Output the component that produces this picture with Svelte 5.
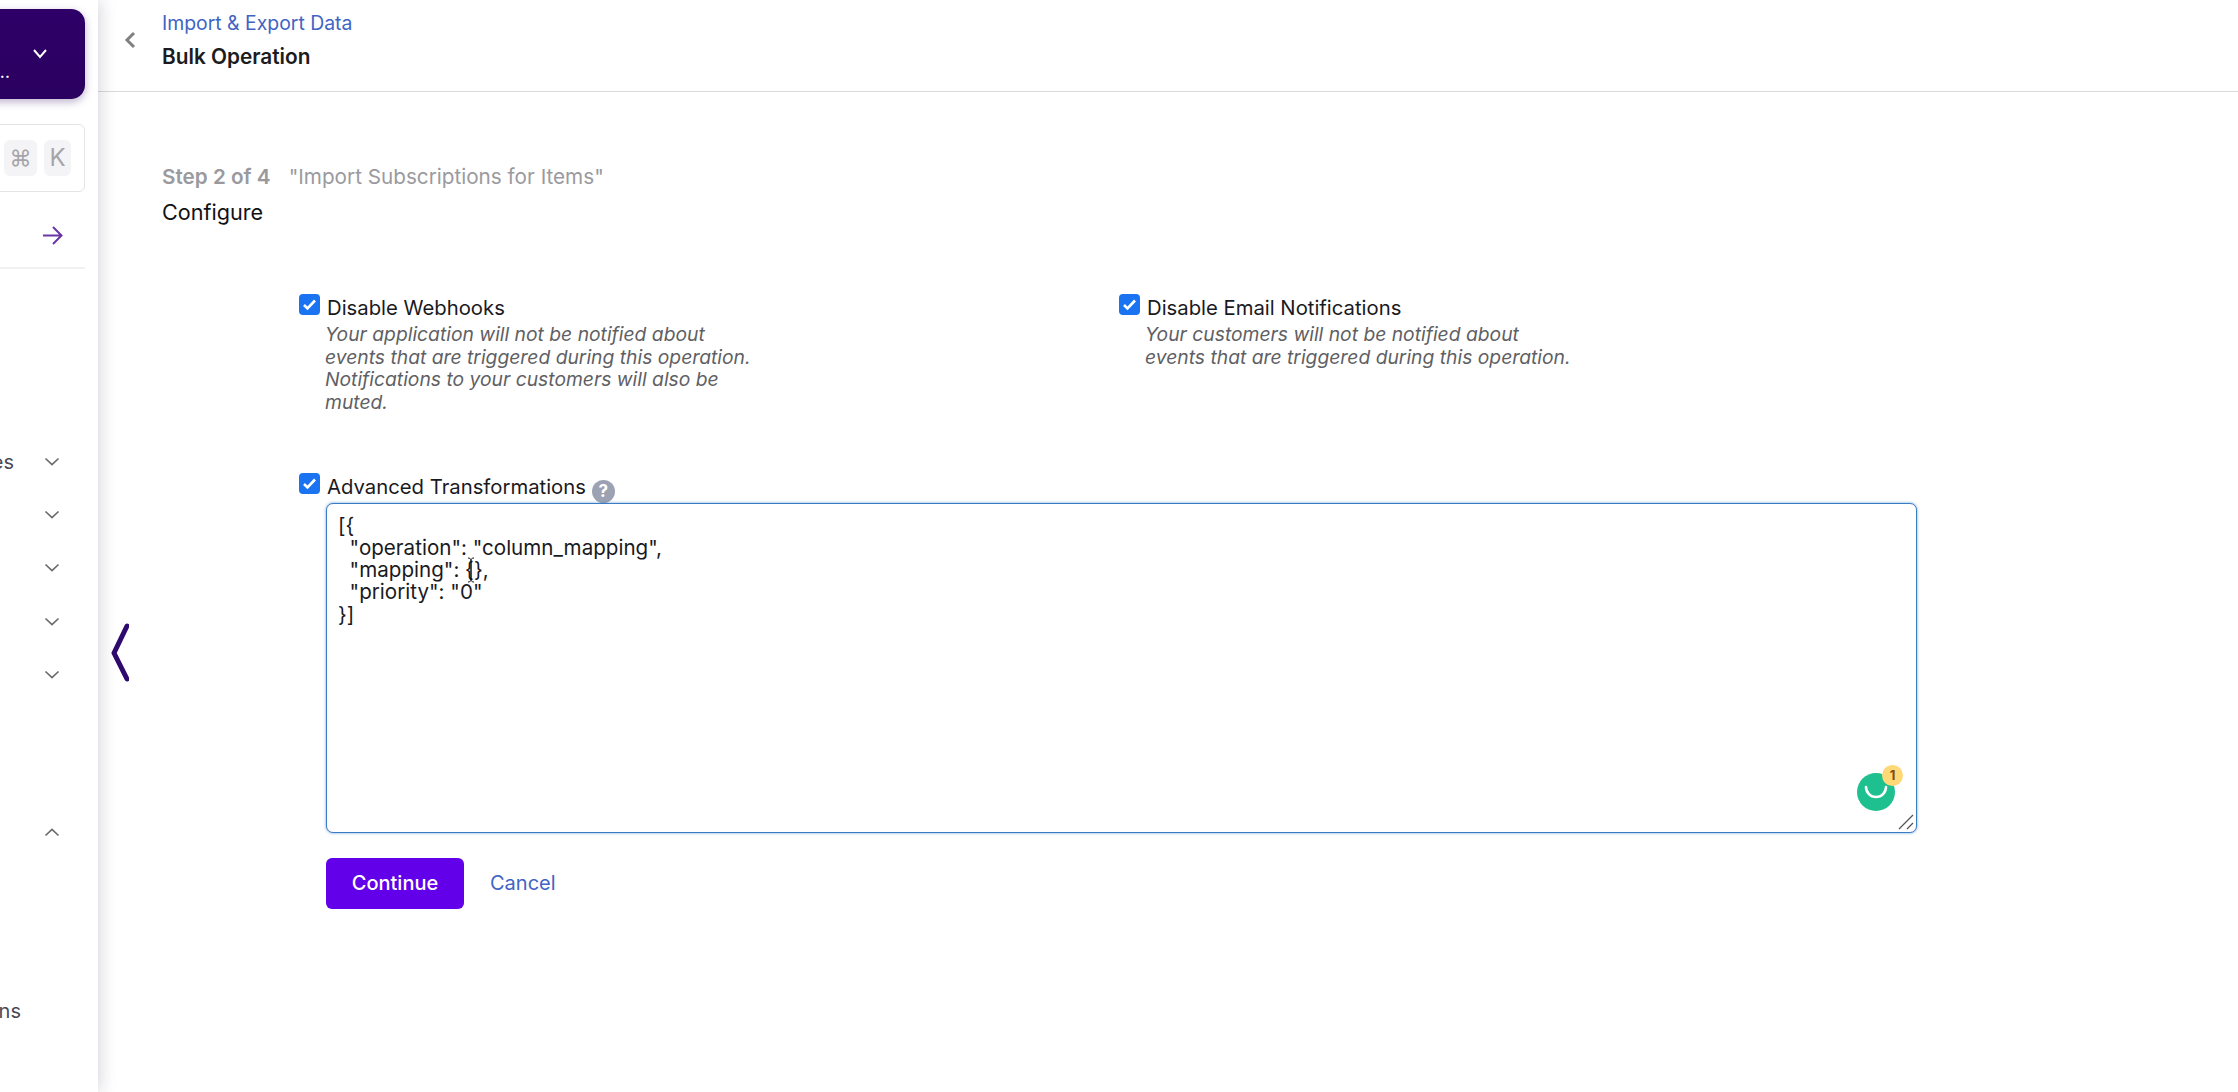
<script lang="ts">
  const jsonValue = `[{
  "operation": "column_mapping",
  "mapping": {},
  "priority": "0"
}]`;

  const navGroups = [
    { label: 'Invoices', open: false },
    { label: '', open: false },
    { label: '', open: false },
    { label: '', open: false },
    { label: '', open: false }
  ];
</script>

<div class="page">
  <aside class="sidebar">
    <div class="sidebar-inner">
      <div class="site-card">
        <span class="site-name">…</span>
        <svg class="site-chevron" width="16" height="12" viewBox="0 0 16 12"><path d="M2 2l6 7 6-7" fill="none" stroke="#fff" stroke-width="2" /></svg>
      </div>
      <div class="search">
        <kbd>⌘</kbd>
        <kbd class="k">K</kbd>
      </div>
      <div class="go-row">
        <svg width="21" height="21" viewBox="0 0 21 21"><path d="M1 10.500h18M11 2l8.500 8.500L11 19" fill="none" stroke="#6a35a6" stroke-width="2" /></svg>
      </div>
      <nav class="nav">
        {#each navGroups as group}
          <div class="nav-row">
            <span>{group.label}</span>
            <svg width="16" height="10" viewBox="0 0 16 10"><path d="M1.500 1.500l6.500 6 6.500-6" fill="none" stroke="#6b6b6f" stroke-width="1.700" /></svg>
          </div>
        {/each}
        <div class="nav-row open">
          <span></span>
          <svg width="16" height="10" viewBox="0 0 16 10"><path d="M1.500 8.500l6.500-6 6.500 6" fill="none" stroke="#6b6b6f" stroke-width="1.700" /></svg>
        </div>
        <div class="nav-row last">
          <span>Integrations</span>
        </div>
      </nav>
    </div>
  </aside>

  <svg class="collapse" width="18" height="60" viewBox="0 0 18 60"><path d="M16 4L3 31l13 26" fill="none" stroke="#2e0a6e" stroke-width="5" stroke-linecap="round" stroke-linejoin="round" /></svg>

  <main class="main">
    <header class="topbar">
      <svg class="back" width="12" height="18" viewBox="0 0 12 18"><path d="M10 2L3 9l7 7" fill="none" stroke="#808080" stroke-width="3" /></svg>
      <div>
        <a class="crumb" href="#import">Import &amp; Export Data</a>
        <h1>Bulk Operation</h1>
      </div>
    </header>

    <section class="content">
      <div class="step"><b>Step 2 of 4</b><span>"Import Subscriptions for Items"</span></div>
      <h2>Configure</h2>

      <div class="options">
        <div class="option">
          <span class="check"><svg width="15" height="13" viewBox="0 0 15 13"><path d="M2 7l3.500 3.500L13 2.500" fill="none" stroke="#fff" stroke-width="2.600" /></svg></span>
          <div>
            <div class="opt-label">Disable Webhooks</div>
            <p class="help">Your application will not be notified about<br />events that are triggered during this operation.<br />Notifications to your customers will also be<br />muted.</p>
          </div>
        </div>
        <div class="option">
          <span class="check"><svg width="15" height="13" viewBox="0 0 15 13"><path d="M2 7l3.500 3.500L13 2.500" fill="none" stroke="#fff" stroke-width="2.600" /></svg></span>
          <div>
            <div class="opt-label">Disable Email Notifications</div>
            <p class="help">Your customers will not be notified about<br />events that are triggered during this operation.</p>
          </div>
        </div>
      </div>

      <div class="advanced">
        <div class="option">
          <span class="check"><svg width="15" height="13" viewBox="0 0 15 13"><path d="M2 7l3.500 3.500L13 2.500" fill="none" stroke="#fff" stroke-width="2.600" /></svg></span>
          <div class="opt-label">Advanced Transformations <span class="hint">?</span></div>
        </div>
        <div class="editor">
          <textarea spellcheck="false" value={jsonValue}></textarea>
          <svg class="ibeam" width="8" height="26" viewBox="0 0 8 26"><path d="M1 1c2 0 3 1 3 2v20c0 1-1 2-3 2M7 1c-2 0-3 1-3 2v20c0 1 1 2 3 2" fill="none" stroke="#111" stroke-width="1" /></svg>
          <div class="grammarly">
            <svg width="24" height="16" viewBox="0 0 24 16"><path d="M2 2a10 10 0 0 0 20 0" fill="none" stroke="#fff" stroke-width="2.600" stroke-linecap="round" /></svg>
            <span class="badge">1</span>
          </div>
          <svg class="grip" width="16" height="16" viewBox="0 0 16 16"><path d="M1 15L15 1M9 15l6-6" fill="none" stroke="#555" stroke-width="1.300" /></svg>
        </div>
        <div class="actions">
          <button class="primary">Continue</button>
          <a class="cancel" href="#cancel">Cancel</a>
        </div>
      </div>
    </section>
  </main>
</div>

<style>
  :global(body) {
    margin: 0;
    background: #fff;
    font-family: Inter, "Liberation Sans", sans-serif;
  }

  .page {
    position: relative;
    display: flex;
    height: 1092px;
    overflow: hidden;
  }

  .sidebar {
    flex: 0 0 98px;
    display: flex;
    justify-content: flex-end;
    overflow: hidden;
    background: #fff;
    box-shadow: 2px 0 16px rgba(30, 30, 60, 0.18);
    z-index: 2;
  }

  .sidebar-inner {
    flex: 0 0 300px;
    padding: 9px 13px 0 0;
    display: flex;
    flex-direction: column;
  }

  .site-card {
    height: 90px;
    border-radius: 14px;
    background: linear-gradient(180deg, #2e0068 0%, #2a0060 100%);
    box-shadow: 0 3px 8px rgba(40, 0, 90, 0.3);
    display: flex;
    justify-content: flex-end;
    align-items: center;
    padding-right: 37px;
    position: relative;
    color: #fff;
  }

  .site-name {
    position: absolute;
    right: 75px;
    top: 51px;
    font-size: 18px;
    line-height: 24px;
  }

  .search {
    margin-top: 25px;
    height: 66px;
    border: 1px solid #e4e4e8;
    border-radius: 6px;
    display: flex;
    justify-content: flex-end;
    align-items: center;
    gap: 7px;
    padding-right: 13px;
  }

  kbd {
    width: 33px;
    height: 36px;
    border-radius: 6px;
    background: #f4f4f6;
    color: #a5a5a9;
    font: 22px/36px Inter, "DejaVu Sans", sans-serif;
    text-align: center;
  }

  kbd.k {
    width: 27px;
    font-size: 24px;
  }

  .go-row {
    height: 77px;
    box-sizing: border-box;
    border-bottom: 2px solid #f1f1f3;
    display: flex;
    justify-content: flex-end;
    align-items: flex-start;
    padding: 33px 22px 0 0;
  }

  .nav {
    padding-top: 166px;
    color: #4a4a55;
    font-size: 20px;
  }

  .nav-row {
    height: 53.300px;
    display: flex;
    justify-content: space-between;
    align-items: center;
    padding-right: 25px;
    box-sizing: border-box;
    white-space: nowrap;
  }

  .nav-row span {
    flex: 0 0 auto;
    width: 229px;
    text-align: right;
  }

  .nav-row.open {
    margin-top: 104px;
  }

  .nav-row.last {
    margin-top: 126px;
  }

  .nav-row.last span {
    width: 236px;
  }

  .collapse {
    position: absolute;
    left: 111px;
    top: 622px;
    z-index: 3;
  }

  .main {
    flex: 1;
    min-width: 0;
  }

  .topbar {
    height: 91px;
    box-sizing: content-box;
    border-bottom: 1px solid #d9d9dc;
    display: flex;
    gap: 26px;
    padding-left: 26px;
    align-items: flex-start;
  }

  .back {
    margin-top: 31px;
  }

  .topbar div {
    margin-top: 11px;
  }

  .crumb {
    display: block;
    color: #3f64c4;
    font-size: 19.400px;
    line-height: 24px;
    margin-bottom: 10px;
    text-decoration: none;
  }

  h1 {
    margin: 0;
    font-size: 20.800px;
    font-weight: 600;
    line-height: 24px;
    color: #1c1c20;
  }

  .content {
    padding: 70px 0 0 64px;
  }

  .step {
    display: flex;
    gap: 18px;
    line-height: 30px;
    font-size: 20.700px;
    color: #9a9a9e;
  }

  .step b {
    font-weight: 600;
  }

  h2 {
    margin: 5px 0 0;
    font-size: 21.600px;
    font-weight: 400;
    line-height: 30px;
    color: #111;
  }

  .options {
    display: grid;
    grid-template-columns: 820px 1fr;
    margin: 67px 0 0 137px;
  }

  .option {
    display: flex;
    gap: 7px;
  }

  .check {
    flex: 0 0 21px;
    height: 21px;
    border-radius: 4px;
    background: #1a73f0;
    display: flex;
    align-items: center;
    justify-content: center;
  }

  .opt-label {
    padding-top: 1px;
    font-size: 20.300px;
    line-height: 26px;
    color: #1a1a1e;
    white-space: nowrap;
  }

  .help {
    margin: 2px 0 0 -2px;
    font-size: 19.300px;
    font-style: italic;
    line-height: 22.700px;
    color: #5f5f64;
    white-space: nowrap;
  }

  .advanced {
    margin: 59px 0 0 137px;
  }

  .hint {
    display: inline-block;
    width: 23px;
    height: 23px;
    border-radius: 50%;
    background: #9da2b3;
    color: #fff;
    font-size: 17px;
    font-weight: 700;
    line-height: 23px;
    text-align: center;
    vertical-align: -3px;
  }

  .editor {
    position: relative;
    margin: 0 0 0 27px;
    width: 1591px;
  }

  textarea {
    display: block;
    width: 100%;
    height: 330px;
    box-sizing: border-box;
    padding: 11px;
    border: 1px solid #3a7cc4;
    border-radius: 7px;
    box-shadow: 0 0 3px rgba(58, 124, 196, 0.75);
    outline: none;
    resize: none;
    font-family: Inter, "Liberation Sans", sans-serif;
    font-size: 20.600px;
    line-height: 22.200px;
    color: #1a1a1e;
  }

  .ibeam {
    position: absolute;
    left: 141px;
    top: 54px;
  }

  .grip {
    position: absolute;
    right: 3px;
    bottom: 3px;
  }

  .grammarly {
    position: absolute;
    left: 1531px;
    top: 270px;
    width: 38px;
    height: 38px;
    border-radius: 50%;
    background: #1fc08f;
    display: flex;
    align-items: center;
    justify-content: center;
  }

  .grammarly svg {
    margin-top: 2px;
  }

  .badge {
    position: absolute;
    right: -8px;
    top: -8px;
    width: 21px;
    height: 21px;
    border-radius: 50%;
    background: #ffd877;
    color: #7a4d10;
    font-size: 13px;
    font-weight: 700;
    line-height: 21px;
    text-align: center;
  }

  .actions {
    margin: 25px 0 0 27px;
    display: flex;
    align-items: center;
    gap: 26px;
  }

  .primary {
    width: 138px;
    height: 51px;
    border: 0;
    border-radius: 6px;
    background: #6200ea;
    color: #fff;
    font-family: inherit;
    font-size: 20px;
    font-weight: 500;
  }

  .cancel {
    color: #3f64c4;
    font-size: 20px;
    text-decoration: none;
  }
</style>
